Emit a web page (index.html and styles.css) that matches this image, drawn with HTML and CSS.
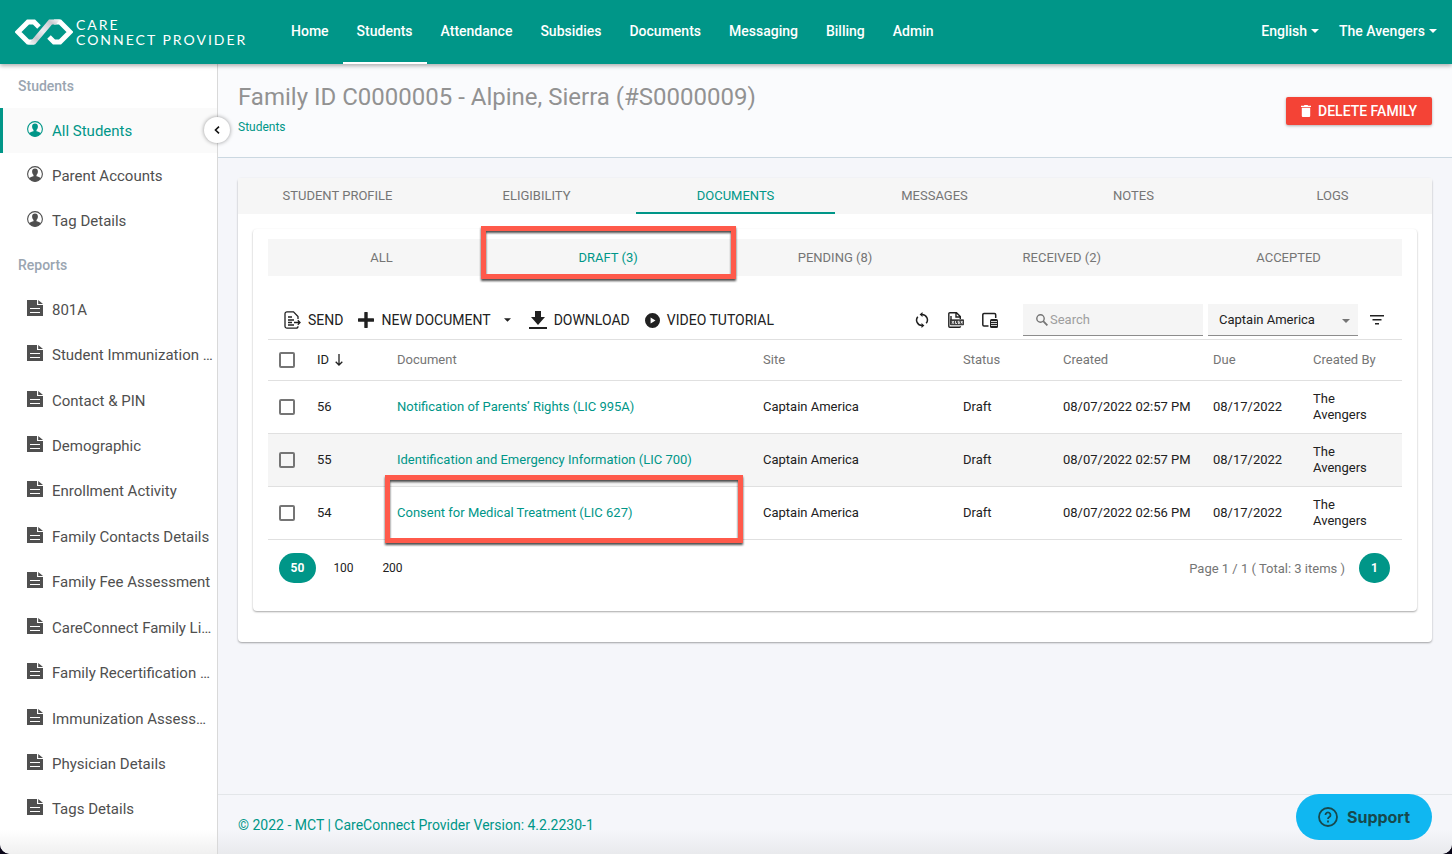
FILE: index.html
```html
<!DOCTYPE html>
<html lang="en">
<head>
    <meta charset="UTF-8">
    <meta name="viewport" content="width=device-width, initial-scale=1.0">
    <title>CareConnect Provider</title>
    <link rel="stylesheet" href="styles.css">
</head>
<body>

    <!-- Shared icons -->
    <svg class="sprite" aria-hidden="true">
        <symbol id="icon-user" viewBox="0 0 16 16">
            <circle cx="8" cy="8" r="7.4" fill="none" stroke="currentColor" stroke-width="1.1"/>
            <path fill="currentColor" d="M8 2.6c-1.9 0-2.9 1.3-2.9 3 0 1.400.6 2.700 1.400 3.400v1.300c-1.600.5-3.200.8-4.400 1.700C3.500 14.200 5.500 15.400 8 15.400s4.500-1.200 5.900-3.400c-1.200-.9-2.800-1.200-4.400-1.700V9c.8-.7 1.400-2 1.400-3.400 0-1.700-1-3-2.900-3z"/>
        </symbol>
        <symbol id="icon-file" viewBox="0 0 16 16">
            <path fill="currentColor" fill-rule="evenodd" d="M0 0h10v5h6v11H0zM3 8v1h10V8zM3 12v1h10v-1z"/>
            <path fill="currentColor" d="M11.200 0 16 4H11.200z"/>
        </symbol>
        <symbol id="icon-caret" viewBox="0 0 8 4">
            <path fill="currentColor" d="M0 0h8L4 4z"/>
        </symbol>
    </svg>

    <!-- Header -->
    <header class="header">
        <a class="logo" href="#">
            <svg width="58" height="26" viewBox="0 0 58 26" fill="none">
                <defs>
                    <linearGradient id="fade" x1="0" y1="1" x2="1" y2="0">
                        <stop offset="0" stop-color="#ffffff"/>
                        <stop offset=".25" stop-color="#c9c9cf"/>
                        <stop offset=".5" stop-color="#ececf0"/>
                        <stop offset=".8" stop-color="#c9c9cf"/>
                        <stop offset="1" stop-color="#ffffff"/>
                    </linearGradient>
                </defs>
                <path d="M24 8 19 3h-6L3 13l10 10h6" stroke="#fff" stroke-width="5"/>
                <path d="M34 18l5 5h6l10-10L45 3h-6" stroke="#fff" stroke-width="5"/>
                <path fill="url(#fade)" d="M13 25.500 34 .5h11l-4 5h-4L20 25.500z"/>
            </svg>
            <span class="logo-text">CARE<br>CONNECT PROVIDER</span>
        </a>
        <nav class="navbar">
            <a href="#">Home</a>
            <a href="#" class="active">Students</a>
            <a href="#">Attendance</a>
            <a href="#">Subsidies</a>
            <a href="#">Documents</a>
            <a href="#">Messaging</a>
            <a href="#">Billing</a>
            <a href="#">Admin</a>
        </nav>
        <div class="user-menu">
            <button type="button">English <svg width="8" height="4"><use href="#icon-caret"/></svg></button>
            <button type="button">The Avengers <svg width="8" height="4"><use href="#icon-caret"/></svg></button>
        </div>
    </header>

    <div class="layout">

        <!-- Sidebar -->
        <aside class="sidebar">
            <h2>Students</h2>
            <ul class="menu">
                <li><a href="#" class="active"><svg><use href="#icon-user"/></svg><span>All Students</span></a></li>
                <li><a href="#"><svg><use href="#icon-user"/></svg><span>Parent Accounts</span></a></li>
                <li><a href="#"><svg><use href="#icon-user"/></svg><span>Tag Details</span></a></li>
            </ul>
            <h2>Reports</h2>
            <ul class="menu reports">
                <li><a href="#"><svg><use href="#icon-file"/></svg><span>801A</span></a></li>
                <li><a href="#"><svg><use href="#icon-file"/></svg><span>Student Immunization …</span></a></li>
                <li><a href="#"><svg><use href="#icon-file"/></svg><span>Contact &amp; PIN</span></a></li>
                <li><a href="#"><svg><use href="#icon-file"/></svg><span>Demographic</span></a></li>
                <li><a href="#"><svg><use href="#icon-file"/></svg><span>Enrollment Activity</span></a></li>
                <li><a href="#"><svg><use href="#icon-file"/></svg><span>Family Contacts Details</span></a></li>
                <li><a href="#"><svg><use href="#icon-file"/></svg><span>Family Fee Assessment</span></a></li>
                <li><a href="#"><svg><use href="#icon-file"/></svg><span>CareConnect Family Li…</span></a></li>
                <li><a href="#"><svg><use href="#icon-file"/></svg><span>Family Recertification …</span></a></li>
                <li><a href="#"><svg><use href="#icon-file"/></svg><span>Immunization Assess…</span></a></li>
                <li><a href="#"><svg><use href="#icon-file"/></svg><span>Physician Details</span></a></li>
                <li><a href="#"><svg><use href="#icon-file"/></svg><span>Tags Details</span></a></li>
            </ul>
            <button type="button" class="collapse-btn" aria-label="Collapse menu">
                <svg width="6" height="8" viewBox="0 0 6 8"><path d="M5 .7 1.500 4 5 7.300" fill="none" stroke="#111" stroke-width="1.600"/></svg>
            </button>
        </aside>

        <!-- Page -->
        <main class="page">
            <div class="page-title">
                <div>
                    <h1>Family ID C0000005 - Alpine, Sierra (#S0000009)</h1>
                    <a href="#">Students</a>
                </div>
                <button type="button" class="delete-btn">
                    <svg width="10" height="12" viewBox="0 0 10 12"><path fill="currentColor" d="M0 .8h2.800L3.500 0h3l.7.800H10v1.200H0zM.8 2.800h8.400V11a1 1 0 0 1-1 1H1.800a1 1 0 0 1-1-1z"/></svg>
                    DELETE FAMILY
                </button>
            </div>

            <div class="card">
                <div class="tabs">
                    <a href="#">STUDENT PROFILE</a>
                    <a href="#">ELIGIBILITY</a>
                    <a href="#" class="active">DOCUMENTS</a>
                    <a href="#">MESSAGES</a>
                    <a href="#">NOTES</a>
                    <a href="#">LOGS</a>
                </div>

                <div class="panel">
                    <div class="sub-tabs">
                        <a href="#">ALL</a>
                        <a href="#" class="active">DRAFT (3)<span class="highlight highlight-tab"></span></a>
                        <a href="#">PENDING (8)</a>
                        <a href="#">RECEIVED (2)</a>
                        <a href="#">ACCEPTED</a>
                    </div>

                    <!-- Toolbar -->
                    <div class="toolbar">
                        <div class="actions">
                            <button type="button">
                                <svg width="17" height="18" viewBox="0 0 17 18" fill="none" stroke="currentColor" stroke-width="1.300"><path d="M14 8V5.500L9.500.8H3A2 2 0 0 0 1 2.800v12.400a2 2 0 0 0 2 2h9a2 2 0 0 0 2-2"/><path d="M4 6h4M4 9h6M4 11.500h4M4 14h6M10 11.500h6M13.800 9.300l2.200 2.200-2.200 2.200"/></svg>
                                SEND
                            </button>
                            <button type="button">
                                <svg width="16" height="16" viewBox="0 0 16 16"><path d="M8 1v14M1 8h14" stroke="currentColor" stroke-width="3.400" stroke-linecap="round"/></svg>
                                NEW DOCUMENT
                                <svg class="drop" width="7" height="4"><use href="#icon-caret"/></svg>
                            </button>
                            <button type="button">
                                <svg width="18" height="18" viewBox="0 0 18 18"><path fill="currentColor" d="M6 0h6v6h4l-7 8-7-8h4zM0 16h18v2H0z"/></svg>
                                DOWNLOAD
                            </button>
                            <button type="button">
                                <svg width="15" height="15" viewBox="0 0 15 15"><path fill="currentColor" fill-rule="evenodd" d="M7.500 0a7.500 7.500 0 1 0 0 15 7.500 7.500 0 0 0 0-15zM5.600 4.500v6l4.900-3z"/></svg>
                                VIDEO TUTORIAL
                            </button>
                        </div>
                        <div class="tools">
                            <button type="button" aria-label="Refresh">
                                <svg width="14" height="16" viewBox="0 0 14 16" fill="none" stroke="currentColor" stroke-width="1.500"><path d="M7 2.500a5.400 5.400 0 0 1 4.200 8.800M7 13.500A5.400 5.400 0 0 1 2.800 4.700"/><path fill="currentColor" stroke="none" d="M7.500 0v5L4.600 2.500zM6.500 16v-5l2.900 2.500z"/></svg>
                            </button>
                            <button type="button" aria-label="Export to Excel">
                                <svg width="16" height="16" viewBox="0 0 16 16" fill="none" stroke="currentColor" stroke-width="1.400"><path d="M12.300 7V4.500L8.500.8H1.800a1 1 0 0 0-1 1v12.400a1 1 0 0 0 1 1h9.700a1 1 0 0 0 1-1M8 1v4h4M3 4v4"/><path d="M2.500 7.800h13v5h-13z" fill="#444" stroke-width=".8"/><path stroke="#fff" stroke-width=".8" d="M4 9l1.800 2.800M5.800 9 4 11.800M7.500 9v2.500H9M11.500 9.300H10v1h1.500v1.200H10M13 9l1.500 2.500M14.500 9 13 11.500"/></svg>
                            </button>
                            <button type="button" aria-label="Column chooser">
                                <svg width="16" height="16" viewBox="0 0 16 16" fill="none" stroke="currentColor" stroke-width="1.500"><path d="M6.500 14H2a1.200 1.200 0 0 1-1.200-1.200V2.700a1.200 1.200 0 0 1 1.200-1.200h10.500a1.200 1.200 0 0 1 1.200 1.200V6"/><path fill="currentColor" stroke="none" d="M9.500 7h5A1.500 1.500 0 0 1 16 8.500v6a1.500 1.500 0 0 1-1.500 1.500h-5A1.500 1.500 0 0 1 8 14.500v-6A1.500 1.500 0 0 1 9.500 7z"/><path d="M9 9.500h6M9 11.500h6M9 13.500h6" stroke="#fff" stroke-width=".8"/></svg>
                            </button>
                            <label class="search">
                                <svg width="12" height="12" viewBox="0 0 12 12" fill="none" stroke="#757575"><circle cx="4.500" cy="4.500" r="3.700" stroke-width="1.400"/><path d="M7.200 7.200l4.200 4.200" stroke-width="1.800"/></svg>
                                <input type="text" placeholder="Search" aria-label="Search">
                            </label>
                            <div class="select-box">
                                <select aria-label="Site">
                                    <option>Captain America</option>
                                </select>
                                <svg width="8" height="4"><use href="#icon-caret"/></svg>
                            </div>
                            <button type="button" class="filter-btn" aria-label="Filter">
                                <svg width="14" height="10" viewBox="0 0 14 10"><path fill="currentColor" d="M0 0h14v1.500H0zM2.500 4h9v1.500h-9zM5 8h4v1.500H5z"/></svg>
                            </button>
                        </div>
                    </div>

                    <!-- Documents -->
                    <table class="grid">
                        <colgroup>
                            <col class="col-check">
                            <col class="col-id">
                            <col>
                            <col class="col-site">
                            <col class="col-status">
                            <col class="col-created">
                            <col class="col-due">
                            <col class="col-by">
                        </colgroup>
                        <thead>
                            <tr>
                                <th><input type="checkbox" aria-label="Select all"></th>
                                <th class="sorted">ID <svg width="8" height="12" viewBox="0 0 8 12"><path d="M4 0v11M.7 7.700 4 11l3.300-3.300" fill="none" stroke="currentColor" stroke-width="1.300"/></svg></th>
                                <th>Document</th>
                                <th>Site</th>
                                <th>Status</th>
                                <th>Created</th>
                                <th>Due</th>
                                <th>Created By</th>
                            </tr>
                        </thead>
                        <tbody>
                            <tr>
                                <td><input type="checkbox" aria-label="Select 56"></td>
                                <td>56</td>
                                <td><a href="#">Notification of Parents’ Rights (LIC 995A)</a></td>
                                <td>Captain America</td>
                                <td>Draft</td>
                                <td>08/07/2022 02:57 PM</td>
                                <td>08/17/2022</td>
                                <td>The<br>Avengers</td>
                            </tr>
                            <tr>
                                <td><input type="checkbox" aria-label="Select 55"></td>
                                <td>55</td>
                                <td><a href="#">Identification and Emergency Information (LIC 700)</a></td>
                                <td>Captain America</td>
                                <td>Draft</td>
                                <td>08/07/2022 02:57 PM</td>
                                <td>08/17/2022</td>
                                <td>The<br>Avengers</td>
                            </tr>
                            <tr>
                                <td><input type="checkbox" aria-label="Select 54"></td>
                                <td>54</td>
                                <td class="marked"><a href="#">Consent for Medical Treatment (LIC 627)</a><span class="highlight highlight-row"></span></td>
                                <td>Captain America</td>
                                <td>Draft</td>
                                <td>08/07/2022 02:56 PM</td>
                                <td>08/17/2022</td>
                                <td>The<br>Avengers</td>
                            </tr>
                        </tbody>
                    </table>

                    <div class="pager">
                        <div class="page-sizes">
                            <button type="button" class="active">50</button>
                            <button type="button">100</button>
                            <button type="button">200</button>
                        </div>
                        <div class="page-info">
                            Page 1 / 1 ( Total: 3 items )
                            <button type="button" class="active">1</button>
                        </div>
                    </div>
                </div>
            </div>

            <footer class="footer">
                <a href="#">© 2022 - MCT | CareConnect Provider Version: 4.2.2230-1</a>
            </footer>
        </main>
    </div>

    <button type="button" class="support-btn">
        <svg width="20" height="20" viewBox="0 0 20 20" fill="none" stroke="currentColor" stroke-width="1.800"><circle cx="10" cy="10" r="9"/><path d="M7.500 8A2.500 2.500 0 1 1 11.300 10.100C10.400 10.700 10 11 10 12M10 13.600v1.800"/></svg>
        Support
    </button>

</body>
</html>
```
FILE: styles.css
```css
* {
    box-sizing: border-box;
}

html {
    background: #0a0618;
}

body {
    display: flex;
    flex-direction: column;
    min-height: 100vh;
    margin: 0;
    font-family: Roboto, "Liberation Sans", sans-serif;
    font-size: 13px;
    color: #212121;
    background: #f5f6fa;
    border-radius: 0 0 10px 10px;
    overflow: hidden;
}

a {
    color: #009688;
    text-decoration: none;
}

button {
    font-family: inherit;
    border: none;
    background: none;
    padding: 0;
    color: inherit;
    cursor: pointer;
}

svg {
    flex: none;
}

.sprite {
    position: absolute;
    width: 0;
    height: 0;
}

/* Header */
.header {
    display: flex;
    position: relative;
    z-index: 2;
    height: 64px;
    background: #009688;
    color: white;
    box-shadow: 0 2px 4px rgba(0, 0, 0, 0.3);
}

.logo {
    display: flex;
    align-items: center;
    gap: 3px;
    width: 277px;
    padding-left: 15px;
    color: white;
}

.logo-text {
    font-family: Lato, sans-serif;
    font-size: 14px;
    line-height: 15px;
    letter-spacing: 2px;
    white-space: nowrap;
}

.navbar {
    display: flex;
}

.navbar a {
    padding: 0 14px;
    line-height: 62px;
    font-size: 14px;
    font-weight: 500;
    color: white;
    border-bottom: 2px solid transparent;
}

.navbar a.active {
    border-color: white;
}

.user-menu {
    display: flex;
    gap: 20px;
    margin-left: auto;
    padding: 0 15px 2px 0;
}

.user-menu button {
    display: flex;
    align-items: center;
    gap: 4px;
    font-size: 14px;
    font-weight: 500;
}

/* Page layout */
.layout {
    display: flex;
    flex: 1;
}

.sidebar {
    display: flex;
    flex-direction: column;
    position: relative;
    width: 218px;
    flex: none;
    padding-bottom: 22px;
    background: linear-gradient(to top, #f0f0f0, #ffffff 24px);
    border-right: 1px solid #d9d9d9;
    border-bottom-left-radius: 10px;
}

.sidebar h2 {
    margin: 0;
    padding-left: 18px;
    font-size: 14px;
    font-weight: 500;
    line-height: 44px;
    color: #9aa5b1;
}

.menu {
    list-style: none;
    margin: 0;
    padding: 0;
}

.menu li {
    display: flex;
    min-height: 45px;
}

.menu a {
    display: flex;
    flex: 1;
    align-items: center;
    gap: 9px;
    padding-left: 27px;
    font-size: 15px;
    color: #4f4f4f;
    white-space: nowrap;
}

.menu svg {
    width: 16px;
    height: 16px;
    margin-bottom: 4px;
}

.menu a.active {
    padding-left: 24px;
    border-left: 3px solid #009688;
    background: #fafafa;
    color: #009688;
}

.reports {
    display: flex;
    flex-direction: column;
    flex: 1;
}

.reports li {
    flex: 1;
}

.collapse-btn {
    display: flex;
    align-items: center;
    justify-content: center;
    position: absolute;
    top: 53px;
    right: -13px;
    width: 26px;
    height: 26px;
    border-radius: 50%;
    background: white;
    box-shadow: 0 0 4px rgba(0, 0, 0, 0.4);
}

.page {
    display: flex;
    flex-direction: column;
    flex: 1;
    min-width: 0;
}

.page-title {
    display: flex;
    justify-content: space-between;
    align-items: center;
    height: 94px;
    padding: 0 20px;
    background: #fafbfd;
    border-bottom: 1px solid #cbd8e1;
}

.page-title h1 {
    margin: 0 0 7px;
    font-size: 24px;
    font-weight: 400;
    line-height: 30px;
    color: #929292;
}

.page-title a {
    display: block;
    font-size: 12px;
    line-height: 16px;
    margin-bottom: 5px;
}

.delete-btn {
    display: flex;
    align-items: center;
    gap: 7px;
    height: 28px;
    padding: 0 15px;
    border-radius: 2px;
    background: #f44336;
    color: white;
    font-size: 14px;
    font-weight: 500;
    box-shadow: 0 1px 3px rgba(0, 0, 0, 0.3);
}

/* Cards */
.card {
    margin: 20px;
    padding-bottom: 31px;
    background: white;
    border-radius: 4px;
    box-shadow: 0 1px 2px rgba(0, 0, 0, 0.35);
}

.tabs,
.sub-tabs {
    display: flex;
    background: #f6f6f6;
}

.tabs a,
.sub-tabs a {
    flex: 1 1 0;
    text-align: center;
    color: #757575;
}

.tabs a {
    line-height: 36px;
}

.sub-tabs a {
    position: relative;
    line-height: 37px;
}

.tabs a.active,
.sub-tabs a.active {
    color: #009688;
}

.tabs a.active {
    box-shadow: inset 0 -2px #009688;
}

.panel {
    margin: 15px 15px 0;
    padding: 10px 15px 28px;
    border-radius: 4px;
    box-shadow: 0 1px 2px rgba(0, 0, 0, 0.35);
}

/* Red callouts */
.highlight {
    position: absolute;
    border: 5px solid #ff5a4b;
    filter: drop-shadow(0 2px 1px rgba(0, 0, 0, 0.7));
    pointer-events: none;
}

.highlight-tab {
    inset: -13px -14px -3px;
}

.highlight-row {
    inset: -12px 10px -4px -2px;
}

/* Toolbar */
.toolbar {
    display: flex;
    justify-content: space-between;
    margin-top: 28px;
    padding-bottom: 3px;
    border-bottom: 1px solid #e0e0e0;
}

.actions,
.tools {
    display: flex;
    align-items: center;
}

.actions {
    gap: 15px;
    padding-left: 16px;
}

.actions button {
    display: flex;
    align-items: center;
    gap: 7px;
    font-size: 14px;
    white-space: nowrap;
}

.drop {
    margin: 0 3px 0 6px;
}

.tools button {
    display: flex;
    justify-content: center;
    width: 34px;
}

.search {
    display: flex;
    align-items: center;
    gap: 2px;
    width: 180px;
    height: 32px;
    margin: 0 5px 0 16px;
    padding-left: 13px;
    background: #f5f5f5;
    border-bottom: 1px solid #8c8c8c;
}

.search input {
    flex: 1;
    min-width: 0;
    padding: 0;
    border: none;
    background: none;
    font-family: inherit;
    font-size: 13px;
}

.search input::placeholder {
    color: #9e9e9e;
}

.select-box {
    position: relative;
    width: 150px;
}

.select-box select {
    appearance: none;
    display: block;
    width: 100%;
    height: 32px;
    padding: 0 11px;
    border: none;
    border-bottom: 1px solid #8c8c8c;
    border-radius: 0;
    background: #f5f5f5;
    font-family: inherit;
    font-size: 13px;
    color: #212121;
}

.select-box svg {
    position: absolute;
    top: 15px;
    right: 8px;
    color: #757575;
    pointer-events: none;
}

.tools .filter-btn {
    width: 38px;
    margin-right: 6px;
}

/* Documents table */
.grid {
    width: 100%;
    table-layout: fixed;
    border-collapse: separate;
    border-spacing: 0;
}

.col-check { width: 39px; }
.col-id { width: 80px; }
.col-site { width: 200px; }
.col-status { width: 100px; }
.col-created { width: 150px; }
.col-due { width: 100px; }
.col-by { width: 99px; }

.grid th,
.grid td {
    height: 53px;
    padding: 0 10px;
    border-bottom: 1px solid #e0e0e0;
    text-align: left;
    font-weight: 400;
    line-height: 16px;
    white-space: nowrap;
}

.grid th {
    height: 41px;
    color: #757575;
}

.grid th.sorted {
    color: #212121;
}

.sorted svg {
    margin-left: 3px;
    vertical-align: -2px;
}

.grid tbody tr:nth-child(even) {
    background: #f5f5f5;
}

.grid .marked {
    position: relative;
}

.grid input {
    appearance: none;
    display: block;
    width: 16px;
    height: 16px;
    margin: 0 0 0 1px;
    border: 2px solid #757575;
    border-radius: 2px;
}

/* Pager */
.pager,
.page-sizes,
.page-info {
    display: flex;
    align-items: center;
}

.pager {
    justify-content: space-between;
    padding: 13px 12px 0 11px;
}

.page-sizes {
    gap: 6px;
}

.pager button {
    height: 30px;
    min-width: 43px;
    padding: 0 8px;
    font-size: 12px;
    border-radius: 15px;
}

.pager button.active {
    min-width: 37px;
    background: #009688;
    color: white;
    font-weight: 700;
}

.page-info {
    gap: 14px;
    color: #757575;
}

.pager .page-info button {
    min-width: 31px;
}

/* Footer */
.footer {
    margin-top: auto;
    height: 60px;
    padding-left: 20px;
    border-top: 1px solid #e3e6e9;
    border-bottom-right-radius: 10px;
    background: linear-gradient(to top, #e9eaed, #f5f6fa 24px);
    font-size: 14px;
    line-height: 60px;
}

.support-btn {
    display: flex;
    align-items: center;
    justify-content: center;
    gap: 9px;
    position: fixed;
    right: 20px;
    bottom: 14px;
    width: 136px;
    height: 46px;
    border-radius: 23px;
    background: #10b7f1;
    color: #17494d;
    font-family: Inter, sans-serif;
    font-size: 16px;
    font-weight: 700;
}
```
